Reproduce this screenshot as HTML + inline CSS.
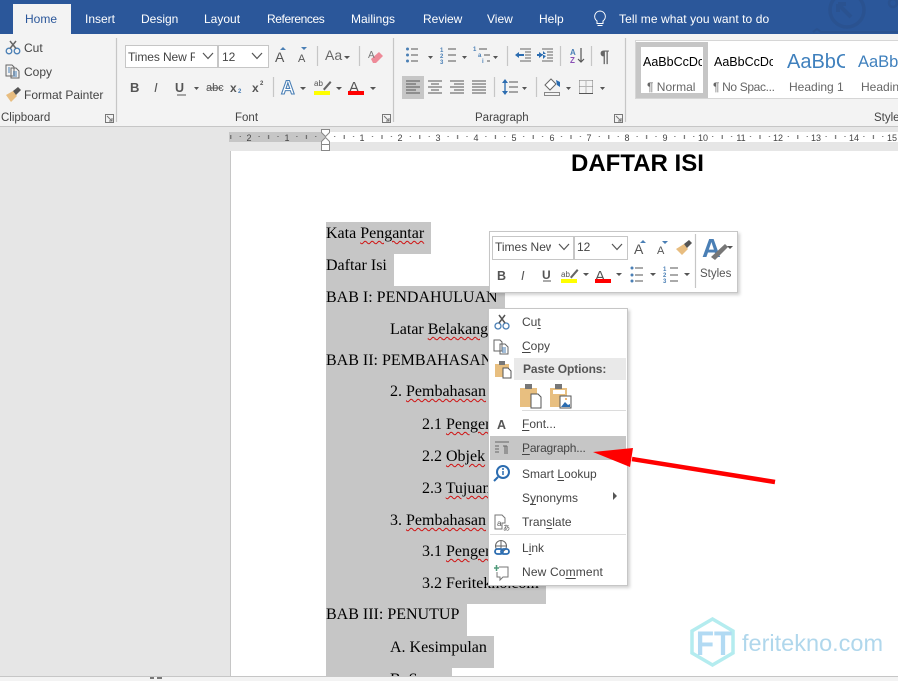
<!DOCTYPE html>
<html><head><meta charset="utf-8"><style>
html,body{margin:0;padding:0}
body{position:relative;width:898px;height:681px;overflow:hidden;background:#e6e6e6;font-family:"Liberation Sans",sans-serif}
.a{position:absolute}
.t{position:absolute;white-space:nowrap;font-size:12px;line-height:16px;color:#444}
.w{color:#fff}
.band{position:absolute;left:326px;height:32px;background:#c6c6c6}
.r{position:absolute;white-space:pre;font:16px/22px "Liberation Serif",serif;color:#000}
.s{text-decoration:underline wavy #d01010 1px;text-underline-offset:2px}
.box{position:absolute;background:#fff;border:2px solid #c6c6c6;box-sizing:border-box}
u{text-underline-offset:2px}
</style></head><body>
<div class="a" style="left:0;top:0;width:898px;height:34px;background:#2b579a"></div>
<div class="a" style="left:0;top:34px;width:898px;height:92px;background:#f3f3f3"></div>
<div class="a" style="left:0;top:126px;width:898px;height:1px;background:#c6c6c6"></div>
<div class="a" style="left:13px;top:4px;width:58px;height:30px;background:#f3f3f3"></div>
<div class="t" style="left:25px;top:11px;color:#2b579a">Home</div>
<div class="t w" style="left:85px;top:11px">Insert</div>
<div class="t w" style="left:141px;top:11px">Design</div>
<div class="t w" style="left:204px;top:11px">Layout</div>
<div class="t w" style="left:267px;top:11px;letter-spacing:-.4px">References</div>
<div class="t w" style="left:351px;top:11px">Mailings</div>
<div class="t w" style="left:423px;top:11px">Review</div>
<div class="t w" style="left:487px;top:11px">View</div>
<div class="t w" style="left:539px;top:11px">Help</div>
<div class="t w" style="left:619px;top:11px;letter-spacing:.08px">Tell me what you want to do</div>

<div class="t" style="left:24px;top:40px">Cut</div>
<div class="t" style="left:24px;top:64px">Copy</div>
<div class="t" style="left:24px;top:87px">Format Painter</div>
<div class="t" style="left:1px;top:110px;font-size:11.5px">Clipboard</div>
<div class="t" style="left:235px;top:110px;font-size:11.5px">Font</div>
<div class="t" style="left:475px;top:110px;font-size:11.5px">Paragraph</div>
<div class="t" style="left:874px;top:110px;font-size:11.5px">Styles</div>

<div class="box" style="left:125px;top:45px;width:93px;height:23px;border-width:1px"></div>
<div class="box" style="left:218px;top:45px;width:51px;height:23px;border-width:1px"></div>
<div class="t" style="left:128px;top:49px;width:67px;overflow:hidden;letter-spacing:-.1px">Times New R</div>
<div class="t" style="left:222px;top:49px">12</div>
<div class="t" style="left:325px;top:47px;font-size:14px;color:#666">Aa</div>
<div class="a" style="left:402px;top:76px;width:22px;height:23px;background:#c6c6c6"></div>

<div class="a" style="left:635px;top:40px;width:263px;height:59px;background:#fff;border:1px solid #d6d6d6;border-right:0;box-sizing:border-box"></div>
<div class="a" style="left:636px;top:42px;width:72px;height:56px;box-sizing:border-box;border:5px solid #c6c6c6"></div>
<div class="t" style="left:643px;top:54px;width:59px;overflow:hidden;font-size:12.5px;color:#000">AaBbCcDc</div>
<div class="t" style="left:714px;top:54px;width:59px;overflow:hidden;font-size:12.5px;color:#000">AaBbCcDc</div>
<div class="t" style="left:787px;top:51px;width:58px;overflow:hidden;font-size:20px;line-height:22px;color:#3f80bd">AaBbCc</div>
<div class="t" style="left:858px;top:52px;width:40px;overflow:hidden;font-size:16.5px;line-height:20px;color:#3f80bd">AaBbCc</div>
<div class="t" style="left:647px;top:79px;color:#666">¶ Normal</div>
<div class="t" style="left:713px;top:79px;color:#666;letter-spacing:-.35px">¶ No Spac...</div>
<div class="t" style="left:789px;top:79px;color:#666">Heading 1</div>
<div class="t" style="left:861px;top:79px;color:#666">Heading 2</div>

<div class="a" style="left:229px;top:132px;width:96px;height:10px;background:#c6c6c6"></div>
<div class="a" style="left:325px;top:132px;width:573px;height:10px;background:#fff"></div>

<div class="a" style="left:231px;top:151px;width:667px;height:525px;background:#fff;border-left:1px solid #c6c6c6;margin-left:-1px"></div>
<div class="a" style="left:0;top:676px;width:898px;height:5px;background:#f3f3f3;border-top:1px solid #c6c6c6;box-sizing:border-box"></div>
<div class="a" style="left:150px;top:677px;width:4px;height:2px;background:#777"></div>
<div class="a" style="left:157px;top:677px;width:5px;height:2px;background:#777"></div>

<div class="a" style="left:571px;top:150px;font:bold 24px/28px 'Liberation Sans',sans-serif;color:#000;white-space:nowrap">DAFTAR ISI</div>

<div class="band" style="top:222px;width:105px"></div>
<div class="band" style="top:254px;width:68px"></div>
<div class="band" style="top:286px;width:179px"></div>
<div class="band" style="top:318px;width:170px"></div>
<div class="band" style="top:350px;width:170px"></div>
<div class="band" style="top:381px;width:170px"></div>
<div class="band" style="top:413px;width:170px"></div>
<div class="band" style="top:445px;width:170px"></div>
<div class="band" style="top:477px;width:170px"></div>
<div class="band" style="top:509px;width:170px"></div>
<div class="band" style="top:540px;width:170px"></div>
<div class="band" style="top:572px;width:220px"></div>
<div class="band" style="top:604px;width:141px"></div>
<div class="band" style="top:636px;width:168px"></div>
<div class="band" style="top:668px;width:126px;height:8px"></div>

<div class="r" style="left:326px;top:223px">Kata <span class="s">Pengantar</span></div>
<div class="r" style="left:326px;top:255px">Daftar Isi</div>
<div class="r" style="left:326px;top:287px">BAB I: PENDAHULUAN</div>
<div class="r" style="left:390px;top:319px">Latar <span class="s">Belakang</span></div>
<div class="r" style="left:326px;top:350px">BAB II: PEMBAHASAN</div>
<div class="r" style="left:390px;top:381px">2. <span class="s">Pembahasan</span> Pertama</div>
<div class="r" style="left:422px;top:414px">2.1 <span class="s">Pengertian</span></div>
<div class="r" style="left:422px;top:446px">2.2 <span class="s">Objek</span> Kajian</div>
<div class="r" style="left:422px;top:478px">2.3 <span class="s">Tujuan</span></div>
<div class="r" style="left:390px;top:510px">3. <span class="s">Pembahasan</span> Kedua</div>
<div class="r" style="left:422px;top:541px">3.1 <span class="s">Pengertian</span></div>
<div class="r" style="left:422px;top:573px">3.2 Feritekno.com</div>
<div class="r" style="left:326px;top:604px">BAB III: PENUTUP</div>
<div class="r" style="left:390px;top:637px">A. Kesimpulan</div>
<div class="a" style="left:390px;top:669px;height:7px;width:60px;overflow:hidden"><div class="r" style="left:0;top:0">B. Saran</div></div>

<!-- mini toolbar -->
<div class="a" style="left:489px;top:231px;width:249px;height:62px;box-sizing:border-box;background:#fff;border:1px solid #c6c6c6;box-shadow:2px 2px 3px rgba(0,0,0,.18)"></div>
<div class="box" style="left:492px;top:236px;width:82px;height:24px;border-width:1px"></div>
<div class="box" style="left:574px;top:236px;width:54px;height:24px;border-width:1px"></div>
<div class="t" style="left:495px;top:239px;width:56px;overflow:hidden">Times New Roman</div>
<div class="t" style="left:577px;top:239px">12</div>
<div class="t" style="left:700px;top:266px;font-size:11.5px;color:#555">Styles</div>

<!-- context menu -->
<div class="a" style="left:488px;top:308px;width:140px;height:278px;box-sizing:border-box;background:#fff;border:1px solid #c6c6c6;box-shadow:2px 2px 3px rgba(0,0,0,.18)"></div>
<div class="a" style="left:514px;top:358px;width:112px;height:22px;background:#e9e9e9"></div>
<div class="a" style="left:490px;top:436px;width:136px;height:24px;background:#c6c6c6"></div>
<div class="a" style="left:522px;top:410px;width:104px;height:1px;background:#dcdcdc"></div>
<div class="a" style="left:490px;top:534px;width:136px;height:1px;background:#dcdcdc"></div>
<div class="t" style="left:522px;top:314px">Cu<u>t</u></div>
<div class="t" style="left:522px;top:338px"><u>C</u>opy</div>
<div class="t" style="left:523px;top:361px;font-weight:bold;color:#555;letter-spacing:-.1px">Paste Options:</div>
<div class="t" style="left:522px;top:416px"><u>F</u>ont...</div>
<div class="t" style="left:522px;top:440px;letter-spacing:-.2px"><u>P</u>aragraph...</div>
<div class="t" style="left:522px;top:466px">Smart <u>L</u>ookup</div>
<div class="t" style="left:522px;top:490px">S<u>y</u>nonyms</div>
<div class="t" style="left:522px;top:514px">Tran<u>s</u>late</div>
<div class="t" style="left:522px;top:540px">L<u>i</u>nk</div>
<div class="t" style="left:522px;top:564px;letter-spacing:.15px">New Co<u>m</u>ment</div>

<svg class="a" style="left:0;top:0" width="898" height="681" viewBox="0 0 898 681" fill="none">
<!-- titlebar watermark -->
<g stroke="#2a5290" stroke-width="3.5"><circle cx="847" cy="10" r="17"/><path d="M838 4h8M838 4v8M838 4l13 13" stroke-width="4"/><circle cx="893" cy="3" r="4" stroke-width="2.5"/><path d="M813 32l4-3 4 3h77" stroke-width="2"/></g>
<!-- bulb -->
<path d="M600 12a5.5 5.5 0 0 1 3 10v2.500h-6V22a5.500 5.500 0 0 1 3-10zM597.500 26.500h5" transform="translate(0,-1)" stroke="#fff" stroke-width="1"/>
<!-- separators -->
<g stroke="#c6c6c6" stroke-width="1.200"><path d="M116.500 38v84M393.500 38v84M625.500 38v84"/><path d="M317.500 46v20M359.500 46v20M273.500 77v20M507.500 46v20M560.500 46v20M591.500 46v20M494.500 77v20M536.500 77v20M695.500 234v54"/></g>
<!-- launchers -->
<g stroke="#777"><path d="M105.500 114.500h8v8h-8zM107 116l5 5M112 118v3h-3"/><path d="M382.500 114.500h8v8h-8zM384 116l5 5M389 118v3h-3"/><path d="M614.500 114.500h8v8h-8zM616 116l5 5M621 118v3h-3"/></g>
<!-- cut -->
<circle cx="9" cy="51" r="2.800" stroke="#4a7fb5" stroke-width="1.300"/><circle cx="17" cy="51" r="2.800" stroke="#4a7fb5" stroke-width="1.300"/>
<path d="M10 48.500L16 41M16 48.500L10 41" stroke="#666" stroke-width="1.500"/>
<!-- copy -->
<path d="M6 65h6l2 2v9H6zM11 68h5l3 3v7h-8z" stroke="#666" fill="#f3f3f3"/><path d="M13 72h4M13 74h4M13 76h4M8 68h2M8 70h2M8 72h2" stroke="#4a7fb5"/>
<!-- painter -->
<path d="M6 95l7-4 4 5-6 6z" fill="#e8bd80"/><path d="M13 91l3 4 5-5-3-3z" fill="#555"/>
<!-- chevrons -->
<g stroke="#555" stroke-width="1.200"><path d="M203 53l5 5.500 5-5.500M252 53l5 5.500 5-5.500M559 244l5 5.500 5-5.500M612 244l5 5.500 5-5.500"/></g>
<!-- grow/shrink -->
<g font-family="Liberation Sans,sans-serif" fill="#555" font-weight="bold">
<text x="275" y="62" font-size="14" font-weight="normal" fill="#555">A</text><text x="298" y="62" font-size="11" font-weight="normal" fill="#555">A</text>
<text x="634" y="254" font-size="14" font-weight="normal">A</text><text x="657" y="254" font-size="11" font-weight="normal">A</text>
<text x="130" y="92" font-size="13">B</text><text x="154" y="92" font-size="13" font-style="italic" font-weight="normal">I</text><text x="175" y="92" font-size="12.500">U</text>
<text x="206" y="91" font-size="11" font-weight="normal">abc</text>
<text x="230" y="92" font-size="12">x</text><text x="238" y="93" font-size="6" fill="#4a7fb5">2</text>
<text x="252" y="92" font-size="12">x</text><text x="260" y="85" font-size="6">2</text>
<text x="497" y="280" font-size="12.500">B</text><text x="521" y="280" font-size="12.500" font-style="italic" font-weight="normal">I</text><text x="542" y="279" font-size="12">U</text>
<text x="497" y="429" font-size="12.500" fill="#555">A</text>
<text x="349" y="92" font-size="15" font-weight="normal">A</text><text x="595" y="281" font-size="15" font-weight="normal">A</text>
<text x="281" y="94" font-size="19" fill="#fff" stroke="#4a7fb5" stroke-width="1.100">A</text>
<text x="702" y="257" font-size="26" fill="#4a7fb5">A</text>
<text x="314" y="86" font-size="8" font-weight="normal">ab</text><text x="561" y="277" font-size="8" font-weight="normal">ab</text>
<text x="600" y="62" font-size="17" fill="#666">¶</text>
</g>
<path d="M177 95h9M176 95" stroke="#555"/><path d="M207 88h15" stroke="#555"/><path d="M543 281h8" stroke="#555"/>
<path d="M280 50l3-3 3 3zM301 47h6l-3 3zM640 243l3-3 3 3zM662 241h6l-3 3z" fill="#4a7fb5" transform="translate(0,0)"/>
<path d="M344 56h6l-3 3zM194 87h5l-2.500 3zM300 87h6l-3 3zM336 87h6l-3 3zM370 87h6l-3 3zM428 56h5l-2.500 3zM462 56h5l-2.500 3zM493 56h5l-2.500 3zM522 87h5l-2.500 3zM566 87h5l-2.500 3zM600 87h5l-2.500 3zM583 273h6l-3 3zM616 273h6l-3 3zM650 273h6l-3 3zM684 273h6l-3 3zM727 246h6l-3 3z" fill="#555"/>
<!-- clear formatting -->
<path d="M371 59l8-7 4 4-7 7h-3z" fill="#ee8a98"/><text x="368" y="58" font-size="10" fill="#777" font-family="Liberation Sans,sans-serif">A</text>
<!-- highlight + font colours -->
<path d="M314 91h16v4h-16zM561 279h16v4h-16z" fill="#ff0"/><path d="M348 91h16v4h-16zM595 279h16v4h-16z" fill="#f00"/>
<path d="M323 89l7-8 1.500 1.500-7 8zM570 277l7-8 1.500 1.500-7 8z" fill="#666"/>
<!-- bullets & numbering -->
<g fill="#4a7fb5"><circle cx="407.500" cy="49" r="1.500"/><circle cx="407.500" cy="55" r="1.500"/><circle cx="407.500" cy="61" r="1.500"/><circle cx="632" cy="268" r="1.500"/><circle cx="632" cy="275" r="1.500"/><circle cx="632" cy="281" r="1.500"/></g>
<g stroke="#555"><path d="M411 49h7M411 55h7M411 61h7M635 268h8M635 275h8M635 281h8M448 49h8M448 55h8M448 61h8M670 268h8M670 275h8M670 281h8M479 49h8M484 55h6M487 61h3"/></g>
<g font-family="Liberation Sans,sans-serif" font-size="6" fill="#4a7fb5" font-weight="bold"><text x="440" y="52">1</text><text x="440" y="58">2</text><text x="440" y="64">3</text><text x="663" y="271">1</text><text x="663" y="277">2</text><text x="663" y="283">3</text><text x="473" y="51">1</text><text x="478" y="57">a</text><text x="482" y="63">i</text></g>
<!-- indents -->
<g stroke="#666"><path d="M520 49h11M525 52h6M525 55h6M525 58h6M520 61h11M542 49h11M547 52h6M547 55h6M547 58h6M542 61h11"/></g>
<path d="M515 55l4-3v2h5v2h-5v2zM543 55l-4-3v2h-2v2h2v2z" fill="#2b6cb0"/><path d="M538 54h5l-3-3v8l3-3" fill="#2b6cb0" transform="translate(3,0)"/>
<!-- sort -->
<g font-family="Liberation Sans,sans-serif" font-weight="bold" font-size="8"><text x="570" y="55" fill="#4a7fb5">A</text><text x="570" y="63" fill="#8a4fb5">Z</text></g>
<path d="M581 48v14M578 59l3 3 3-3" stroke="#555" stroke-width="1.200"/>
<!-- alignment -->
<g stroke="#555"><path d="M406 81h14M406 84h10M406 87h14M406 90h10M406 93h14" transform="translate(0,0)"/>
<path d="M428 81h14M431 84h8M428 87h14M431 90h8M428 93h14"/>
<path d="M450 81h14M454 84h10M450 87h14M454 90h10M450 93h14"/>
<path d="M472 81h14M472 84h14M472 87h14M472 90h14M472 93h14"/>
<path d="M509 82h9M509 87h9M509 92h9"/></g>
<path d="M505 81v12" stroke="#2b6cb0" stroke-width="1.300"/><path d="M502 83l3-4 3 4zM502 91l3 4 3-4z" fill="#2b6cb0"/>
<!-- shading -->
<path d="M545 85l6-6 5 5-6 6z" stroke="#666" fill="#fff"/><path d="M556 80l4 2v5l-3-2z" fill="#2b6cb0"/><path d="M544.500 92.500h15v3h-15z" stroke="#888"/>
<!-- borders -->
<path d="M579.500 80.500h13M579.500 86.500h13M579.500 80.500v13M586 80.500v13M592.500 80.500v13" stroke="#777" stroke-dasharray="1 1"/><path d="M579 93.500h14" stroke="#555"/>
<!-- ruler -->
<defs><pattern id="tk" width="37.800" height="10" patternUnits="userSpaceOnUse" x="325" y="132"><rect x="9.200" y="4" width="1" height="1" fill="#555"/><rect x="18.700" y="3" width="1" height="4" fill="#555"/><rect x="28.100" y="4" width="1" height="1" fill="#555"/></pattern></defs>
<rect x="229" y="132" width="669" height="10" fill="url(#tk)"/>
<g font-family="Liberation Sans,sans-serif" font-size="9" fill="#444" text-anchor="middle">
<text x="249" y="141">2</text><text x="287" y="141">1</text><text x="362" y="141">1</text><text x="400" y="141">2</text><text x="438" y="141">3</text><text x="476" y="141">4</text><text x="514" y="141">5</text><text x="552" y="141">6</text><text x="589" y="141">7</text><text x="627" y="141">8</text><text x="665" y="141">9</text><text x="703" y="141">10</text><text x="741" y="141">11</text><text x="778" y="141">12</text><text x="816" y="141">13</text><text x="854" y="141">14</text><text x="892" y="141">15</text></g>
<path d="M321.500 129.500h8v3l-4 4-4-4zM321.500 144.500v-3l4-4 4 4v3zM321.500 144.500h8v6h-8z" fill="#fff" stroke="#888"/>
<!-- mini painter -->
<path d="M676 249l8-5 4 5-6 6z" fill="#e8bd80"/><path d="M684 244l3 4 5-5-3-3z" fill="#555"/>
<path d="M711 257l14-13 3 3-13 13z" fill="#777"/>
<!-- context icons -->
<circle cx="498" cy="326" r="3" stroke="#4a7fb5" stroke-width="1.300"/><circle cx="506" cy="326" r="3" stroke="#4a7fb5" stroke-width="1.300"/><path d="M499 323l6-8M505 323l-6-8" stroke="#555" stroke-width="1.500"/>
<path d="M494 340h6l2 2v9h-8zM500 344h5l3 3v7h-8z" stroke="#666" fill="#fff"/><path d="M502 348h4M502 350h4M502 352h4" stroke="#4a7fb5"/>
<path d="M495 364h14v13h-14z" fill="#e8bf80"/><path d="M499 361h6v4h-6z" fill="#777"/><path d="M503 368h5l3 3v7h-8z" stroke="#555" fill="#fff"/>
<path d="M520 388h17v19h-17z" fill="#e8bf80"/><path d="M525 384h7v5h-7z" fill="#777"/><path d="M531 394h7l3 3v11h-10z" stroke="#555" fill="#fff"/>
<path d="M550 388h17v19h-17z" fill="#e8bf80"/><path d="M555 384h7v5h-7z" fill="#777"/><path d="M553 390h12v4h-12z" fill="#fff"/><path d="M560 396h11v12h-11z" stroke="#555" fill="#fff"/><path d="M561 407l4-5 3 3 2-1v3z" fill="#2b6cb0"/><circle cx="566" cy="399" r="1" fill="#e8a050"/>
<g stroke="#666"><path d="M495 442h14M495 446h4M495 449h4M495 452h4"/><path d="M503 446h4M505 446v8M507 446v8" /></g>
<circle cx="503" cy="472" r="6" stroke="#2b6cb0" stroke-width="2"/><path d="M498 477l-4 4" stroke="#2b6cb0" stroke-width="2"/><path d="M503 471v4" stroke="#2b6cb0" stroke-width="1.500"/><circle cx="503" cy="469" r="1" fill="#2b6cb0"/>
<path d="M613 492v8l4-4z" fill="#555"/>
<path d="M495 515h7l3 3v5h-3v6h-7z" stroke="#777" fill="#fff"/>
<text x="497" y="526" font-size="8" fill="#555" font-family="Liberation Sans,sans-serif">a</text><text x="503" y="530" font-size="7" fill="#555" font-family="Noto Sans CJK JP,sans-serif">あ</text>
<circle cx="501" cy="546" r="5.500" stroke="#666"/><path d="M495.500 546h11M501 540.500v11" stroke="#666"/>
<rect x="495" y="549" width="8" height="5" rx="2.500" stroke="#2b6cb0" stroke-width="1.800" fill="#fff"/><rect x="501" y="549" width="8" height="5" rx="2.500" stroke="#2b6cb0" stroke-width="1.800"/>
<path d="M499 567h9v10h-5l-3 3v-3h-3v-5" stroke="#777"/><path d="M494 568h5M496.500 565v6" stroke="#4f9a7a" stroke-width="1.500"/>
<!-- arrow -->
<path d="M632 459L775 482" stroke="#f00" stroke-width="4.500"/>
<path d="M593 452L633 448L630 467Z" fill="#f00"/>
<!-- logo -->
<path d="M712.500 619L733 631V653L712.500 665L692 653V631Z" stroke="#b4ecef" stroke-width="3.500"/>
<text x="696" y="655" font-family="Liberation Sans,sans-serif" font-weight="bold" font-size="34" fill="#b2daf3" textLength="36" lengthAdjust="spacingAndGlyphs">FT</text>
<text x="742" y="651" font-family="Liberation Sans,sans-serif" font-size="23.500" fill="#b0d7ec">feritekno.com</text>
</svg>
</body></html>
